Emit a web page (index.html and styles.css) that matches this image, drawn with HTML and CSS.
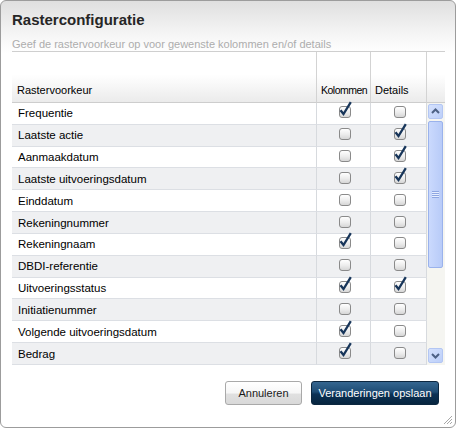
FILE: index.html
```html
<!DOCTYPE html>
<html>
<head>
<meta charset="utf-8">
<link rel="stylesheet" href="styles.css">
</head>
<body>
<div class="dialog">
  <div class="title">Rasterconfiguratie</div>
  <div class="subtitle">Geef de rastervoorkeur op voor gewenste kolommen en/of details</div>
  <div class="head">
    <div class="hcell">Rastervoorkeur</div>
    <div class="hcell narrow">Kolommen</div>
    <div class="hcell">Details</div>
    <div class="hcell last"></div>
  </div>
  <div class="body">
    <div class="rows">
      <div class="row"><div class="name">Frequentie</div><div class="c"><span class="cb on"><svg class="tick" width="14" height="19" viewBox="0 0 14 19"><polyline points="1.5,10.2 4.5,14 11.8,2.2"/></svg></span></div><div class="c"><span class="cb"></span></div></div>
      <div class="row"><div class="name">Laatste actie</div><div class="c"><span class="cb"></span></div><div class="c"><span class="cb on"><svg class="tick" width="14" height="19" viewBox="0 0 14 19"><polyline points="1.5,10.2 4.5,14 11.8,2.2"/></svg></span></div></div>
      <div class="row"><div class="name">Aanmaakdatum</div><div class="c"><span class="cb"></span></div><div class="c"><span class="cb on"><svg class="tick" width="14" height="19" viewBox="0 0 14 19"><polyline points="1.5,10.2 4.5,14 11.8,2.2"/></svg></span></div></div>
      <div class="row"><div class="name">Laatste uitvoeringsdatum</div><div class="c"><span class="cb"></span></div><div class="c"><span class="cb on"><svg class="tick" width="14" height="19" viewBox="0 0 14 19"><polyline points="1.5,10.2 4.5,14 11.8,2.2"/></svg></span></div></div>
      <div class="row"><div class="name">Einddatum</div><div class="c"><span class="cb"></span></div><div class="c"><span class="cb"></span></div></div>
      <div class="row"><div class="name">Rekeningnummer</div><div class="c"><span class="cb"></span></div><div class="c"><span class="cb"></span></div></div>
      <div class="row"><div class="name">Rekeningnaam</div><div class="c"><span class="cb on"><svg class="tick" width="14" height="19" viewBox="0 0 14 19"><polyline points="1.5,10.2 4.5,14 11.8,2.2"/></svg></span></div><div class="c"><span class="cb"></span></div></div>
      <div class="row"><div class="name">DBDI-referentie</div><div class="c"><span class="cb"></span></div><div class="c"><span class="cb"></span></div></div>
      <div class="row"><div class="name">Uitvoeringsstatus</div><div class="c"><span class="cb on"><svg class="tick" width="14" height="19" viewBox="0 0 14 19"><polyline points="1.5,10.2 4.5,14 11.8,2.2"/></svg></span></div><div class="c"><span class="cb on"><svg class="tick" width="14" height="19" viewBox="0 0 14 19"><polyline points="1.5,10.2 4.5,14 11.8,2.2"/></svg></span></div></div>
      <div class="row"><div class="name">Initiatienummer</div><div class="c"><span class="cb"></span></div><div class="c"><span class="cb"></span></div></div>
      <div class="row"><div class="name">Volgende uitvoeringsdatum</div><div class="c"><span class="cb on"><svg class="tick" width="14" height="19" viewBox="0 0 14 19"><polyline points="1.5,10.2 4.5,14 11.8,2.2"/></svg></span></div><div class="c"><span class="cb"></span></div></div>
      <div class="row"><div class="name">Bedrag</div><div class="c"><span class="cb on"><svg class="tick" width="14" height="19" viewBox="0 0 14 19"><polyline points="1.5,10.2 4.5,14 11.8,2.2"/></svg></span></div><div class="c"><span class="cb"></span></div></div>
    </div>
    <div class="sb">
      <div class="sbtn"><svg width="13" height="13" viewBox="0 0 13 13"><polyline points="3,8 6.5,4.5 10,8" fill="none" stroke="#4d6185" stroke-width="2"/></svg></div>
      <div class="thumb"><span class="grip"></span></div>
      <div class="spacer"></div>
      <div class="sbtn"><svg width="13" height="13" viewBox="0 0 13 13"><polyline points="3,5 6.5,8.5 10,5" fill="none" stroke="#4d6185" stroke-width="2"/></svg></div>
    </div>
  </div>
  <div class="footer">
    <button class="btn cancel">Annuleren</button>
    <button class="btn save">Veranderingen opslaan</button>
  </div>
  <svg class="grip-corner" width="10" height="10" viewBox="0 0 10 10">
    <line x1="9" y1="1" x2="1" y2="9" stroke="#a8a8a8" stroke-width="1"/>
    <line x1="9" y1="4" x2="4" y2="9" stroke="#a8a8a8" stroke-width="1"/>
    <line x1="9" y1="7" x2="7" y2="9" stroke="#a8a8a8" stroke-width="1"/>
  </svg>
</div>
</body>
</html>
```

FILE: styles.css
```css
* { box-sizing: border-box; }
html, body { margin: 0; padding: 0; background: #fff; }
body {
  font-family: "Liberation Sans", Arial, sans-serif;
  font-size: 11px;
  color: #000;
}
.dialog {
  position: relative;
  width: 456px;
  height: 428px;
  border: 1px solid #9c9c9c;
  border-radius: 6px;
  background: linear-gradient(#dfdfdf 0, #f3f3f3 30px, #fff 52px);
  padding: 10px 10px 0 11px;
  display: flex;
  flex-direction: column;
}
.title {
  font-size: 15px;
  font-weight: bold;
  line-height: 18px;
  color: #262626;
}
.subtitle {
  margin-top: 9px;
  height: 14px;
  line-height: 13px;
  color: #adadad;
  border-bottom: 1px solid #cfcfcf;
  white-space: nowrap;
}
.head {
  display: grid;
  grid-template-columns: 305px 54px 56px 18px;
  height: 51px;
}
.hcell {
  display: flex;
  align-items: flex-end;
  padding: 0 0 5px 4px;
  line-height: 13px;
  white-space: nowrap;
  overflow: hidden;
  background: linear-gradient(#fff 45%, #ebebeb 100%);
  border-right: 1px solid #d3d3d3;
  border-bottom: 1px solid #cdcdcd;
}
.hcell:first-child { padding-left: 5px; }
.hcell.narrow { font-size: 10.5px; letter-spacing: -0.5px; }
.hcell.last { border-right: none; }
.body {
  display: flex;
  height: 262px;
}
.rows { width: 415px; }
.row {
  display: grid;
  grid-template-columns: 305px 54px 56px;
  height: 21.83px;
}
.row:nth-child(even) { background: #eff0f2; }
.row > div {
  border-right: 1px solid #d7dade;
  border-bottom: 1px solid #dcdfe4;
}
.name {
  display: flex;
  align-items: center;
  padding-left: 6px;
  font-size: 11.5px;
  white-space: nowrap;
}
.c {
  display: flex;
  align-items: center;
  justify-content: center;
  padding-left: 2px;
}
.cb {
  position: relative;
  width: 12px;
  height: 12px;
  margin-top: -2px;
  border: 1px solid #8a8a8a;
  border-radius: 3px;
  background: linear-gradient(#ffffff, #ececec 55%, #d6d6d6);
}
.tick {
  position: absolute;
  left: -1px;
  top: -7px;
  fill: none;
  stroke: #17355a;
  stroke-width: 2.3;
}
.sb {
  width: 18px;
  background: #f5f5f1;
  display: flex;
  flex-direction: column;
  padding: 1px 2px 2px 1px;
}
.sbtn {
  height: 15px;
  border: 1px solid #b3c6f3;
  border-radius: 2px;
  background: linear-gradient(135deg, #d5e1fd, #bccff9);
  display: flex;
  align-items: center;
  justify-content: center;
}
.thumb {
  margin-top: 2px;
  height: 147px;
  border: 1px solid #9ab2ec;
  border-radius: 2px;
  background: linear-gradient(90deg, #cad9fd, #b8cbf8);
  display: flex;
  align-items: center;
  justify-content: center;
}
.grip {
  width: 7px;
  height: 7px;
  background: repeating-linear-gradient(#8ea6e2 0, #8ea6e2 1px, #e6eeff 1px, #e6eeff 2px);
}
.spacer { flex: 1; }
.footer {
  display: flex;
  justify-content: flex-end;
  gap: 9px;
  margin-top: 16px;
  padding-right: 6px;
}
.btn {
  height: 24px;
  font-family: "Liberation Sans", Arial, sans-serif;
  font-size: 11px;
  border-radius: 3px;
  margin: 0;
  cursor: pointer;
}
.cancel {
  width: 77px;
  color: #1a1a1a;
  border: 1px solid #a9a9a9;
  background: linear-gradient(#ffffff 0, #f6f6f6 50%, #e0e0e0 55%, #d9d9d9 100%);
}
.save {
  width: 128px;
  color: #fff;
  border: 1px solid #0c2740;
  background: linear-gradient(#356690 0, #1e4c74 45%, #0b3155 55%, #07253f 100%);
}
.grip-corner {
  position: absolute;
  right: 2px;
  bottom: 2px;
}
```
